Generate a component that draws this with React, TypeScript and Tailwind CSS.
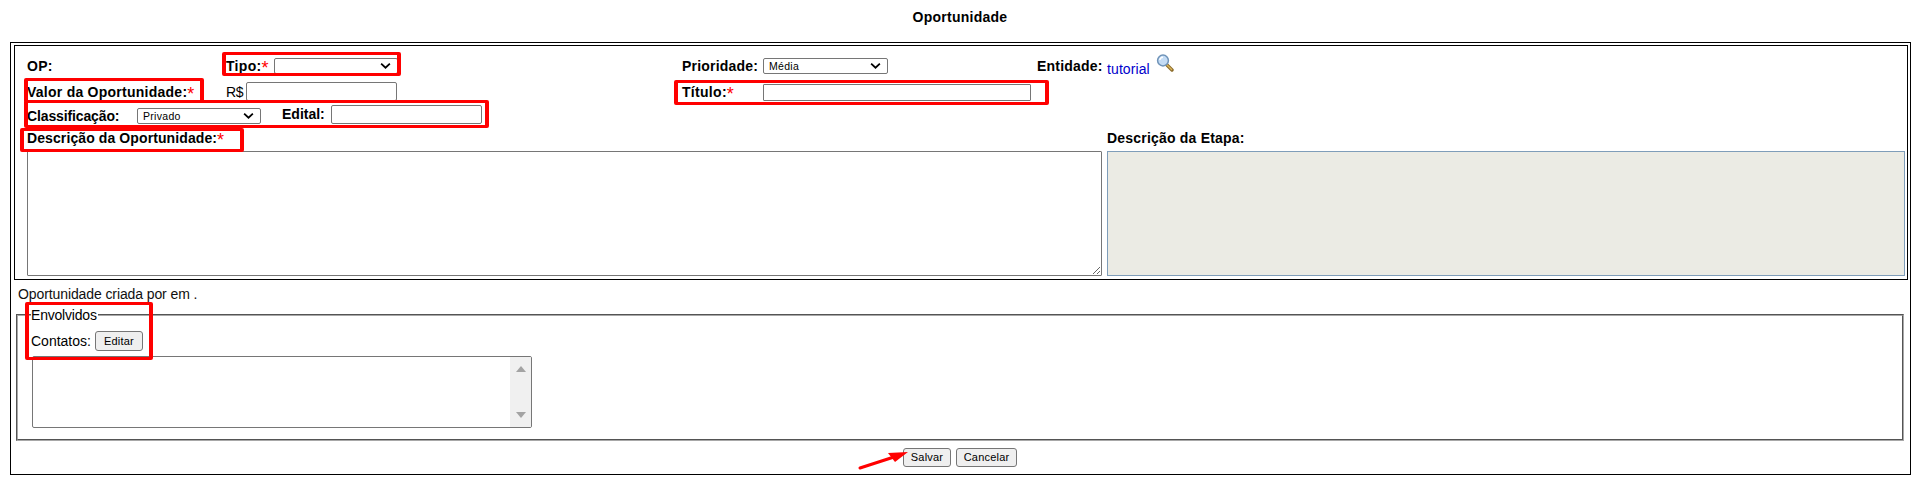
import React from "react";

const labelCls = "font-bold text-[14px] leading-[16px] text-black whitespace-nowrap";
const Star = () => <span className="relative top-[3px] font-normal text-[#ff0000] text-[18px] leading-[0]">*</span>;

function Chevron() {
  return (
    <svg viewBox="0 0 12 8" className="absolute right-[6px] top-1/2 -translate-y-1/2 w-[11px] h-[7px]" fill="none" stroke="#000" strokeWidth="2">
      <path d="M1 1.2 L6 6 L11 1.2" />
    </svg>
  );
}

function Sel({ value, w }: { value: string; w: string }) {
  return (
    <div className={`relative shrink-0 ${w} h-[16px] border border-[#767676] rounded-[2px] bg-white`}>
      <div className="pl-[5px] text-[10.5px] leading-[14px] text-black tracking-[0.3px]">{value}</div>
      <Chevron />
    </div>
  );
}

function Btn({ children, w }: { children: React.ReactNode; w: string }) {
  return (
    <button className={`${w} h-[19px] border border-[#767676] rounded-[3px] bg-[#efefef] text-[11px] leading-[15px] text-black tracking-[0.2px]`}>
      {children}
    </button>
  );
}

function Lens() {
  return (
    <svg viewBox="0 0 18 18" className="w-[18px] h-[18px] shrink-0">
      <path d="M10.5 10.5 L16 16" stroke="#8a6a2a" strokeWidth="3.4" strokeLinecap="round" />
      <path d="M10.8 10.8 L15.6 15.6" stroke="#d9b45a" strokeWidth="1.4" strokeLinecap="round" />
      <circle cx="7" cy="6.5" r="5.4" fill="#c4dcf5" stroke="#6f93b8" strokeWidth="1.5" />
      <path d="M3.8 6 A3.4 3.4 0 0 1 7 3.2" stroke="#ffffff" strokeWidth="1.4" fill="none" />
    </svg>
  );
}

function Mark({ cls }: { cls: string }) {
  return <div className={`absolute border-x-[4px] border-y-[3px] border-[#ff0000] rounded-[2px] ${cls}`} />;
}

export default function App() {
  return (
    <div className="relative w-[1919px] h-[500px] bg-white overflow-hidden font-['Liberation_Sans',Arial,sans-serif]">
      <div className="h-[42px] pt-[9px] pl-[1px] text-center font-bold text-[14px] leading-[16px] tracking-[0.25px] text-black">Oportunidade</div>

      <div className="ml-[10px] w-[1901px] h-[433px] border border-black">
        <div className="ml-[3px] mt-[2px] w-[1894px] h-[235px] border border-black pl-[12px] pt-[10px]">
          <div className="flex items-center h-[19px]">
            <div className={`${labelCls} w-[199px] tracking-[0.3px]`}>OP:</div>
            <div className={`${labelCls} w-[48px] tracking-[0.3px]`}>Tipo:<Star /></div>
            <Sel value="" w="w-[124px]" />
            <div className={`${labelCls} ml-[284px] w-[81px] tracking-[0.2px]`}>Prioridade:</div>
            <Sel value="Média" w="w-[125px]" />
            <div className={`${labelCls} ml-[149px] w-[70px] tracking-[0.2px]`}>Entidade:</div>
            <div className="text-[14px] leading-[16px] text-[#0000cc] mt-[6px] w-[49px] tracking-[0.1px]">tutorial</div>
            <div className="-mt-[6px]"><Lens /></div>
          </div>

          <div className="flex items-center h-[23px] mt-[5px]">
            <div className={`${labelCls} w-[199px] tracking-[0.25px]`}>Valor da Oportunidade:<Star /></div>
            <div className="text-[14px] leading-[16px] text-black w-[20px] tracking-[-0.4px]">R$</div>
            <div className="w-[151px] h-[19px] border border-[#767676] rounded-[2px] bg-white -mt-[1px]" />
            <div className={`${labelCls} ml-[285px] w-[81px] tracking-[0.3px]`}>Título:<Star /></div>
            <div className="w-[268px] h-[17px] border border-[#767676] rounded-[1px] bg-white mt-[1px]" />
          </div>

          <div className="flex items-center h-[23px] mt-[1px]">
            <div className={`${labelCls} w-[110px] tracking-[-0.13px]`}>Classificação:</div>
            <Sel value="Privado" w="w-[124px]" />
            <div className={`${labelCls} ml-[21px] w-[49px] -mt-[3px] tracking-[0px]`}>Edital:</div>
            <div className="w-[151px] h-[19px] border border-[#767676] rounded-[2px] bg-white -mt-[3px]" />
          </div>

          <div className="flex items-center h-[21px]">
            <div className={`${labelCls} w-[1080px] tracking-[0.1px]`}>Descrição da Oportunidade:<Star /></div>
            <div className={`${labelCls} tracking-[0.2px]`}>Descrição da Etapa:</div>
          </div>

          <div className="flex gap-[5px] mt-[3px]">
            <textarea className="w-[1075px] h-[125px] border border-[#767676] rounded-[1px] bg-white outline-none" />
            <textarea disabled className="w-[798px] h-[125px] border border-[#7f9db9] bg-[#ebebe4] resize-none" />
          </div>
        </div>

        <div className="ml-[7px] mt-[6px] text-[14px] leading-[16px] text-[#101010] tracking-[-0.1px]">Oportunidade criada por em .</div>

        <fieldset className="ml-[5px] mt-[5px] w-[1888px] h-[134px] border-2 [border-style:groove] border-[#a8a8a8] pl-[13px]">
          <legend className="text-[14px] leading-[16px] text-black pr-[1px] tracking-[-0.2px]">Envolvidos</legend>
          <div className="flex items-center gap-[4px] mt-[8px] h-[20px]">
            <span className="text-[14px] leading-[16px] text-black">Contatos:</span>
            <Btn w="w-[48px] h-[20px]">Editar</Btn>
          </div>
          <div className="flex ml-[1px] w-[500px] h-[72px] mt-[5px] border border-[#767676] rounded-[2px] bg-white overflow-hidden">
            <div className="flex-1" />
            <div className="w-[21px] bg-[#f0f0f0] flex flex-col items-center justify-between py-[9px]">
              <svg viewBox="0 0 10 6" className="w-[10px] h-[6px]"><path d="M0 6 L5 0 L10 6 Z" fill="#a3a3a3" /></svg>
              <svg viewBox="0 0 10 6" className="w-[10px] h-[6px]"><path d="M0 0 L5 6 L10 0 Z" fill="#a3a3a3" /></svg>
            </div>
          </div>
        </fieldset>

        <div className="flex justify-center gap-[5px] mt-[7px] pr-[1px]">
          <Btn w="w-[48px]">Salvar</Btn>
          <Btn w="w-[61px]">Cancelar</Btn>
        </div>
      </div>

      <Mark cls="left-[222px] top-[52px] w-[179px] h-[24px]" />
      <Mark cls="left-[24px] top-[78px] w-[180px] h-[25px]" />
      <Mark cls="left-[24px] top-[100px] w-[465px] h-[28px]" />
      <Mark cls="left-[20px] top-[128px] w-[224px] h-[24px]" />
      <Mark cls="left-[674px] top-[80px] w-[375px] h-[25px]" />
      <Mark cls="left-[25px] top-[302px] w-[128px] h-[58px]" />
      <svg className="absolute left-[858px] top-[450px] w-[52px] h-[20px]" viewBox="0 0 52 20">
        <path d="M2 18 L36 7" stroke="#ff0000" strokeWidth="3" strokeLinecap="round" />
        <path d="M50 2 L30 3 L37 12 Z" fill="#ff0000" />
      </svg>
    </div>
  );
}
